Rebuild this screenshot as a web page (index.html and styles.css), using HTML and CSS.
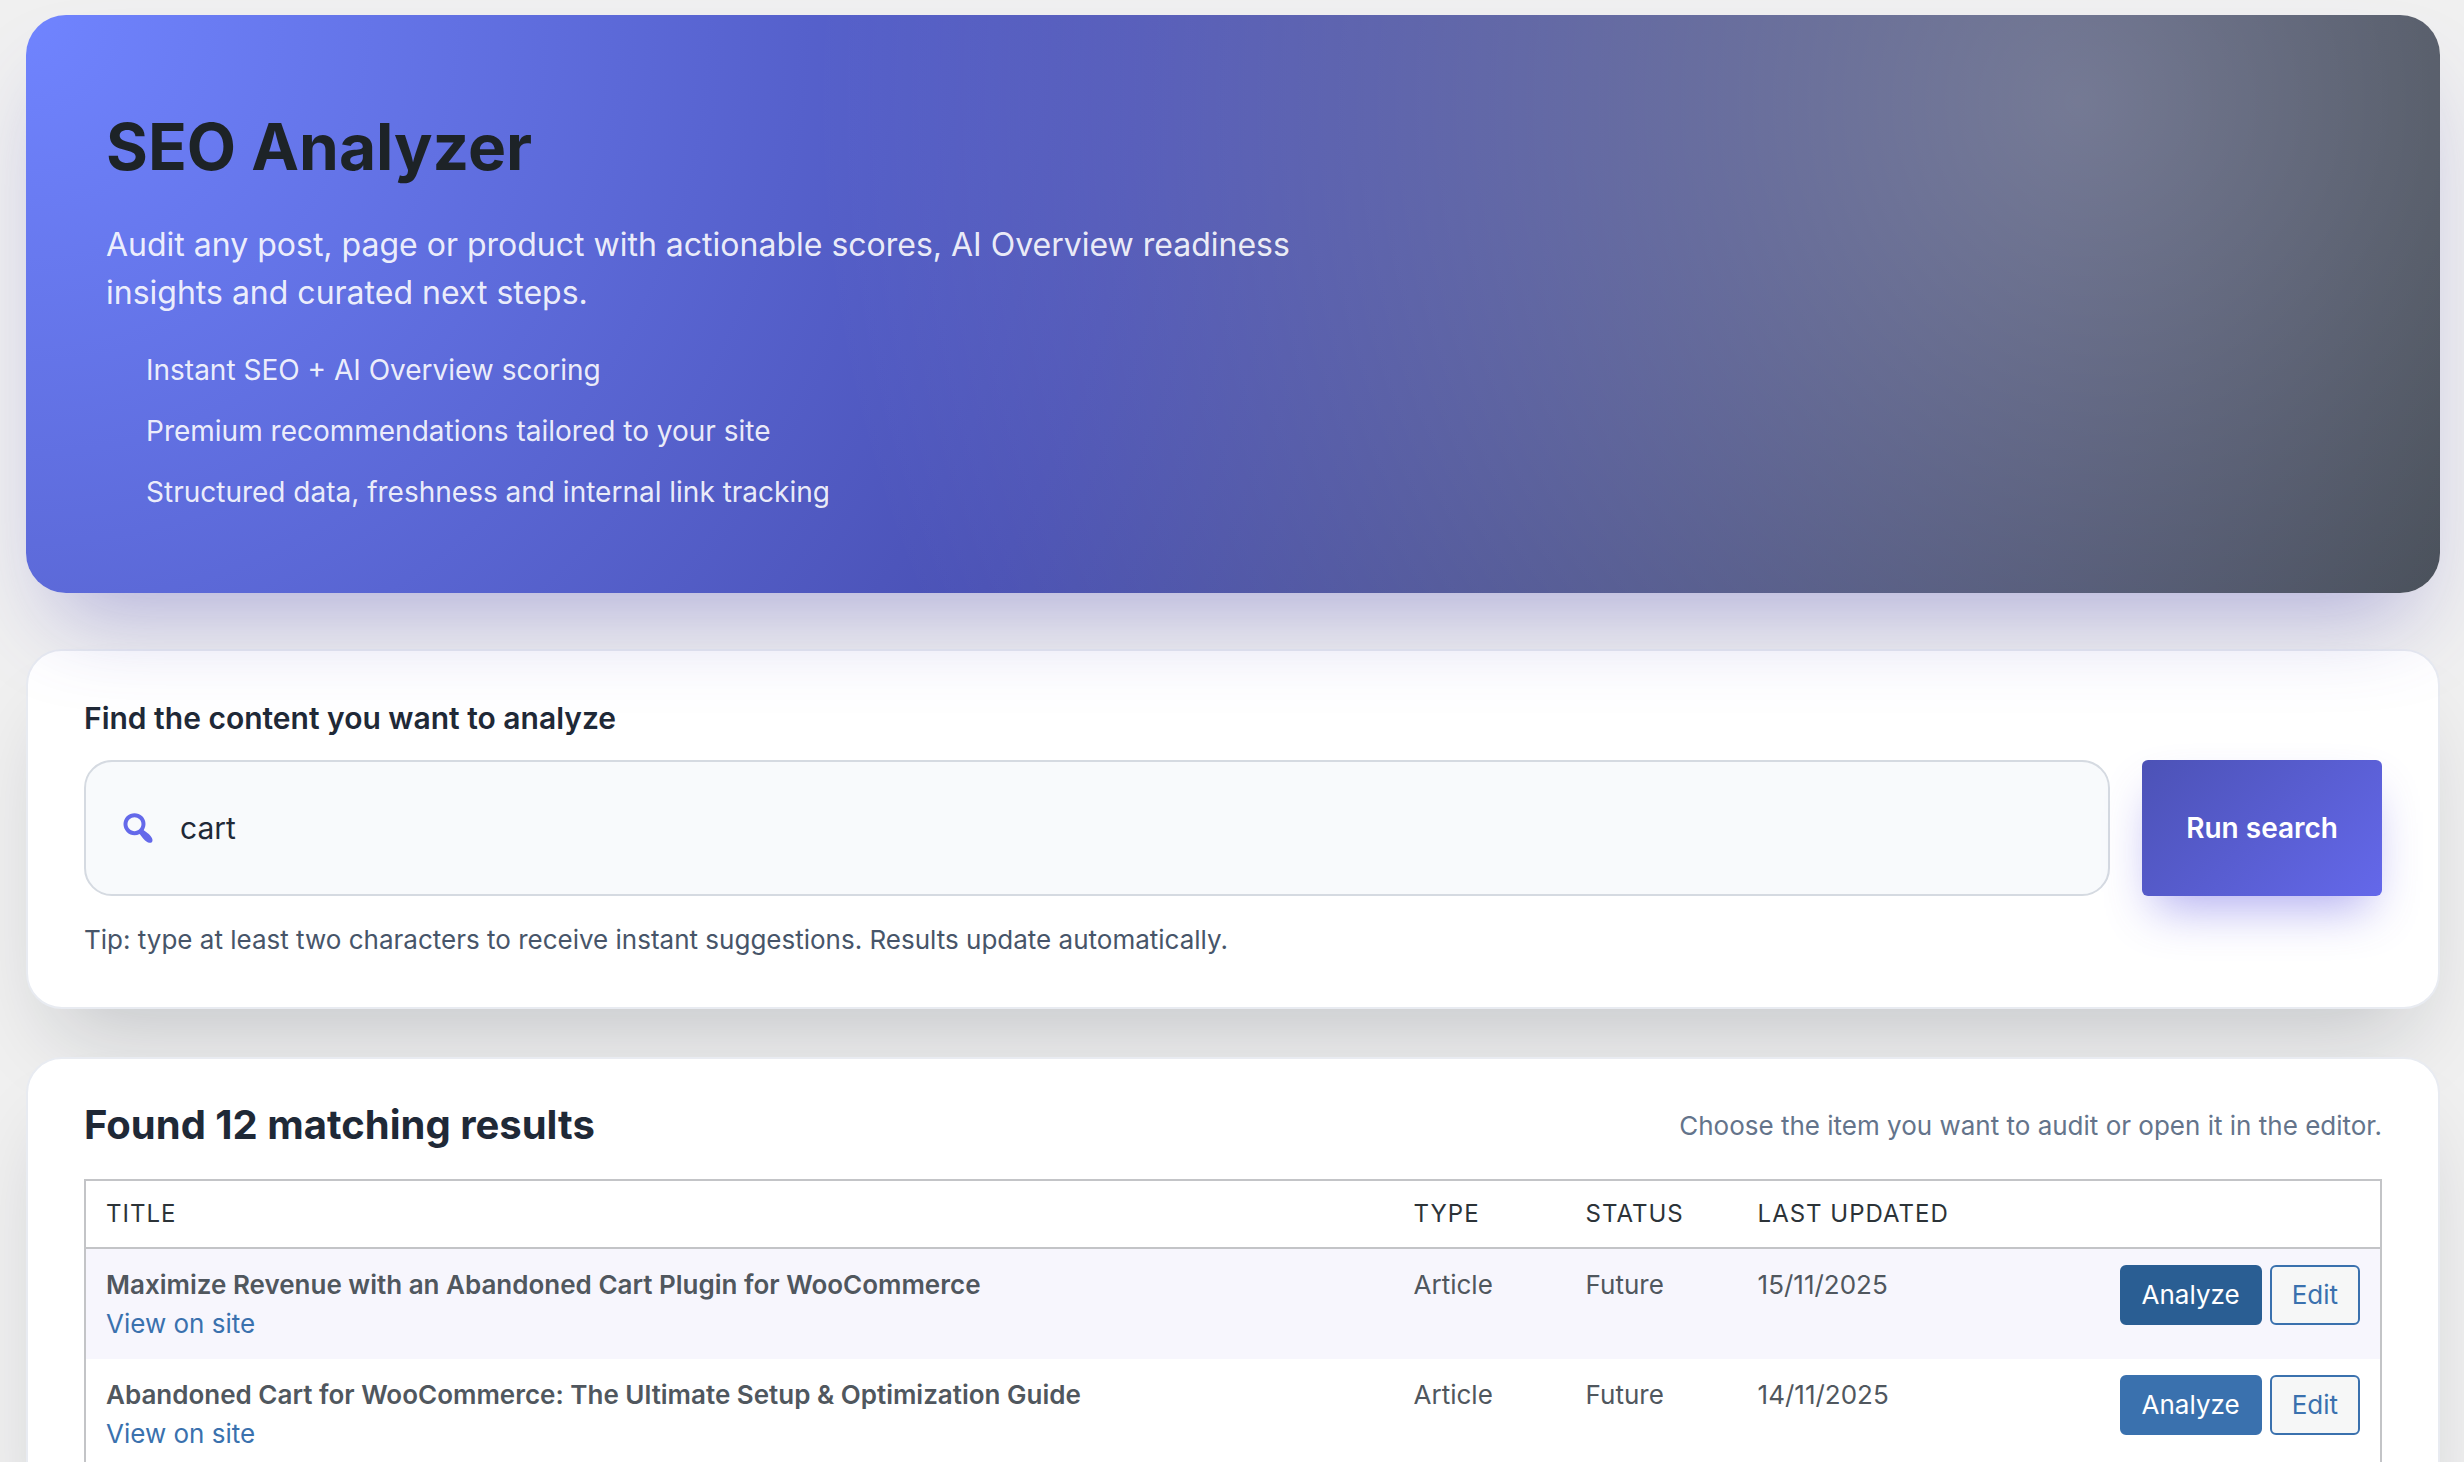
FILE: index.html
```html
<!DOCTYPE html>
<html lang="en">
<head>
  <meta charset="UTF-8">
  <meta name="viewport" content="width=device-width, initial-scale=1.0">
  <title>SEO Analyzer</title>
  <link rel="stylesheet" href="styles.css">
</head>
<body>
  <header class="hero">
    <h1>SEO Analyzer</h1>
    <p class="hero-lead">Audit any post, page or product with actionable scores, AI Overview readiness insights and curated next steps.</p>
    <ul class="hero-list">
      <li>Instant SEO + AI Overview scoring</li>
      <li>Premium recommendations tailored to your site</li>
      <li>Structured data, freshness and internal link tracking</li>
    </ul>
  </header>

  <form class="card search-card">
    <label class="search-label" for="search-input">Find the content you want to analyze</label>
    <div class="search-row">
      <div class="search-field">
        <svg class="search-icon" viewBox="0 0 20 20" aria-hidden="true">
          <path d="M12.14 4.18c1.87 1.87 2.11 4.75.72 6.89.12.1.22.21.36.31.2.16.47.36.81.59.34.24.56.39.66.47.42.31.73.57.94.78.32.32.6.65.84 1 .25.35.44.69.59 1.04.14.35.21.68.18 1-.02.32-.14.59-.36.81s-.49.34-.81.36c-.31.02-.65-.04-.99-.19-.35-.14-.7-.34-1.04-.59-.35-.24-.68-.52-1-.84-.21-.21-.47-.52-.77-.93-.1-.13-.25-.35-.47-.66-.22-.32-.4-.57-.56-.78-.16-.2-.29-.35-.44-.5-2.07 1.09-4.69.76-6.44-.98-2.14-2.15-2.14-5.64 0-7.78 2.15-2.15 5.63-2.15 7.78 0zm-1.41 6.36c1.36-1.37 1.36-3.58 0-4.95-1.37-1.37-3.59-1.37-4.95 0-1.37 1.37-1.37 3.58 0 4.95 1.36 1.37 3.58 1.37 4.95 0z"/>
        </svg>
        <input type="text" id="search-input" value="cart">
      </div>
      <button type="submit" class="search-btn">Run search</button>
    </div>
    <p class="search-tip">Tip: type at least two characters to receive instant suggestions. Results update automatically.</p>
  </form>

  <section class="card results-card">
    <div class="results-head">
      <h2>Found 12 matching results</h2>
      <p>Choose the item you want to audit or open it in the editor.</p>
    </div>
    <table class="results-table">
      <thead>
        <tr>
          <th class="col-title">Title</th>
          <th class="col-type">Type</th>
          <th class="col-status">Status</th>
          <th class="col-date">Last updated</th>
          <th class="col-actions"></th>
        </tr>
      </thead>
      <tbody>
        <tr>
          <td><strong>Maximize Revenue with an Abandoned Cart Plugin for WooCommerce</strong><br><a href="#">View on site</a></td>
          <td>Article</td>
          <td>Future</td>
          <td>15/11/2025</td>
          <td>
            <div class="actions">
              <button type="button" class="btn btn-primary active">Analyze</button>
              <a href="#" class="btn">Edit</a>
            </div>
          </td>
        </tr>
        <tr>
          <td><strong>Abandoned Cart for WooCommerce: The Ultimate Setup &amp; Optimization Guide</strong><br><a href="#">View on site</a></td>
          <td>Article</td>
          <td>Future</td>
          <td>14/11/2025</td>
          <td>
            <div class="actions">
              <button type="button" class="btn btn-primary">Analyze</button>
              <a href="#" class="btn">Edit</a>
            </div>
          </td>
        </tr>
      </tbody>
    </table>
  </section>
</body>
</html>
```
FILE: styles.css
```css
* {
  box-sizing: border-box;
}

body {
  margin: 0;
  padding: 15px 24px 48px 26px;
  background: #f0f0f0;
  color: #50575e;
  font-family: Inter, sans-serif;
  font-size: 26px;
  line-height: 39px;
}

h1, h2, p, ul {
  margin: 0;
}

button, input {
  font-family: inherit;
}

/* Hero */
.hero {
  position: relative;
  padding: 80px;
  border-radius: 40px;
  background:
    radial-gradient(circle at 85% 15%, rgba(255, 255, 255, 0.33), rgba(255, 255, 255, 0) 60%),
    radial-gradient(circle at 0 0, #7084ff 0%, #4a51b5 45%, #252d39 100%);
  box-shadow: 0 50px 90px -30px rgba(79, 76, 185, 0.4);
  color: rgba(255, 255, 255, 0.9);
}

.hero h1 {
  margin-bottom: 22px;
  color: #1d2327;
  font-size: 64px;
  font-weight: 700;
  line-height: 104px;
}

.hero-lead {
  max-width: 1240px;
  margin-bottom: 32px;
  font-size: 32px;
  line-height: 48px;
}

.hero-list {
  display: grid;
  gap: 19px;
  padding-left: 40px;
  list-style: none;
  font-size: 28px;
  line-height: 42px;
}

/* Cards */
.card {
  padding: 48px 56px;
  border: 2px solid #e8ebf1;
  border-radius: 36px;
  background: #fff;
  box-shadow: 0 50px 90px -30px rgba(15, 23, 42, 0.2);
}

.search-card {
  margin-top: 56px;
}

.search-label {
  display: block;
  margin-bottom: 22px;
  color: #1f2937;
  font-size: 30px;
  font-weight: 600;
}

.search-row {
  display: flex;
  gap: 32px;
}

.search-field {
  display: flex;
  flex: 1;
  align-items: center;
  gap: 22px;
  height: 136px;
  padding: 0 32px;
  border: 2px solid #d5dae1;
  border-radius: 28px;
  background: #f8fafc;
}

.search-icon {
  width: 40px;
  height: 40px;
  fill: #6469ea;
}

.search-field input {
  flex: 1;
  padding: 0;
  border: none;
  outline: none;
  background: none;
  color: #1f2937;
  font-size: 30px;
}

.search-btn {
  padding: 0 44px;
  border: none;
  border-radius: 6px;
  background: linear-gradient(135deg, #4c52b6, #6468ea);
  box-shadow: 0 24px 48px -12px rgba(84, 76, 225, 0.45);
  color: #fff;
  font-size: 28px;
  font-weight: 600;
}

.search-tip {
  margin-top: 24px;
  color: #475569;
}

/* Results */
.results-card {
  margin-top: 48px;
  padding-top: 40px;
}

.results-head {
  display: flex;
  justify-content: space-between;
  align-items: center;
  margin-bottom: 28px;
}

.results-head h2 {
  color: #1f2937;
  font-size: 40px;
  font-weight: 700;
  line-height: 52px;
}

.results-head p {
  color: #64748b;
}

.results-table {
  width: 100%;
  border: 2px solid #c3c4c7;
  border-spacing: 0;
  table-layout: fixed;
}

.results-table th,
.results-table td {
  padding: 16px 20px;
  text-align: left;
  vertical-align: top;
}

.results-table th {
  border-bottom: 2px solid #c3c4c7;
  color: #2c3338;
  font-size: 24px;
  font-weight: 400;
  letter-spacing: 1px;
  line-height: 34px;
  text-transform: uppercase;
}

.col-title { width: 57%; }
.col-type, .col-status { width: 172px; }
.col-date { width: 240px; }

.results-table tbody tr:nth-child(odd) {
  background: #f7f6fd;
}

.results-table strong {
  font-weight: 600;
}

a {
  color: #3a71ae;
  text-decoration: none;
}

.actions {
  display: flex;
  justify-content: flex-end;
  gap: 8px;
}

.btn {
  height: 60px;
  padding: 0 20px;
  border: 2px solid #3a71ae;
  border-radius: 6px;
  background: #f6f7f7;
  color: #3a71ae;
  font-size: 26px;
  line-height: 56px;
}

.btn-primary {
  background: #3a71ae;
  color: #fff;
}

.btn-primary.active {
  border-color: #2a5e93;
  background: #2a5e93;
}
```
